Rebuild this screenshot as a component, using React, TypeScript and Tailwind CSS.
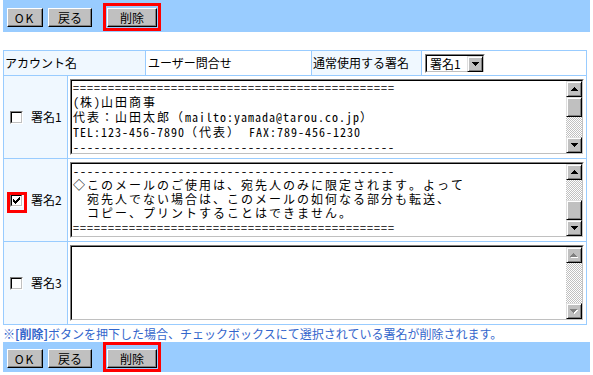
import type { ReactNode } from "react";

const MONO = "font-['Noto_Sans_Mono_CJK_JP','Noto_Sans_CJK_JP',monospace]";

const UP = ["...#...", "..###..", ".#####.", "#######"];
const DOWN = [...UP].reverse();
const CHECK = ["......#", ".....##", "#...###", "##.###.", "#####..", ".###...", "..#...."];

const LINE_EQ = "=".repeat(46);
const LINE_DASH = "-".repeat(46);

const SIG1 = [
  LINE_EQ,
  "(株)山田商事",
  "代表：山田太郎（mailto:yamada@tarou.co.jp）",
  "TEL:123-456-7890（代表）　FAX:789-456-1230",
  LINE_DASH,
];

const SIG2 = [
  LINE_DASH,
  "◇このメールのご使用は、宛先人のみに限定されます。よって",
  "　宛先人でない場合は、このメールの如何なる部分も転送、",
  "　コピー、プリントすることはできません。",
  LINE_EQ,
];

// 1px ドット絵（矢印・チェック）
function Pixels({ rows, color, shadow }: { rows: string[]; color: string; shadow?: string }) {
  const w = rows[0].length + (shadow ? 1 : 0);
  const h = rows.length + (shadow ? 1 : 0);
  const dots = (fill: string, off: number) =>
    rows.flatMap((r, y) =>
      [...r].map((c, x) =>
        c === "#" ? (
          <rect key={`${fill}-${x}-${y}`} x={x + off} y={y + off} width={1} height={1} fill={fill} />
        ) : null,
      ),
    );
  return (
    <svg width={w} height={h} shapeRendering="crispEdges">
      {shadow && dots(shadow, 1)}
      {dots(color, 0)}
    </svg>
  );
}

// 全角は14px、半角は7px のマスに揃える
function MonoLine({ line, lineClass }: { line: string; lineClass: string }) {
  const runs: { wide: boolean; s: string }[] = [];
  for (const ch of line) {
    const wide = ch.charCodeAt(0) > 0xff;
    const last = runs[runs.length - 1];
    if (last && last.wide === wide) last.s += ch;
    else runs.push({ wide, s: ch });
  }
  return (
    <div className={`whitespace-pre ${lineClass}`}>
      {runs.map((r, i) => (
        <span key={i} className={r.wide ? "tracking-[2px]" : "tracking-[1px]"}>
          {r.s}
        </span>
      ))}
    </div>
  );
}

function WinButton({ className, children }: { className: string; children: ReactNode }) {
  return (
    <button
      type="button"
      className={`flex h-[19px] items-center justify-center border border-t-white border-l-white border-r-black border-b-black bg-[#c0c0c0] text-[12px] leading-none text-black shadow-[inset_-1px_-1px_0_#808080] ${className}`}
    >
      {children}
    </button>
  );
}

function ButtonBar({ bottom }: { bottom?: boolean }) {
  return (
    <div className={`flex w-[587px] items-start bg-[#99ccff] pl-[4px] ${bottom ? "h-[30px]" : "h-[32px]"}`}>
      <WinButton className={`w-[36px] tracking-[2px] ${bottom ? "mt-[7px]" : "mt-[8px]"}`}>OK</WinButton>
      <WinButton className={`ml-[5px] w-[44px] ${bottom ? "mt-[7px]" : "mt-[8px]"}`}>戻る</WinButton>
      <div
        className={`ml-[11px] border-[3px] border-[#ff0000] px-[1px] pb-[1px] ${bottom ? "pt-[4px]" : "mt-[3px] pt-[2px]"}`}
      >
        <WinButton className="w-[50px]">削除</WinButton>
      </div>
    </div>
  );
}

function Sunken({ className, children }: { className: string; children: ReactNode }) {
  return (
    <div className={`border border-t-[#808080] border-l-[#808080] border-r-white border-b-white ${className}`}>
      <div className="flex h-full border border-t-black border-l-black border-r-[#c0c0c0] border-b-[#c0c0c0] bg-white">
        {children}
      </div>
    </div>
  );
}

function ScrollButton({ rows, disabled }: { rows: string[]; disabled?: boolean }) {
  return (
    <div className="flex h-[16px] w-[16px] shrink-0 items-center justify-center border border-t-[#dfdfdf] border-l-[#dfdfdf] border-r-black border-b-black bg-[#c0c0c0] shadow-[inset_1px_1px_0_#fff,inset_-1px_-1px_0_#808080]">
      {disabled ? (
        <Pixels rows={rows} color="#808080" shadow="#ffffff" />
      ) : (
        <Pixels rows={rows} color="#000000" />
      )}
    </div>
  );
}

function Track() {
  return (
    <div className="flex-1 bg-[repeating-conic-gradient(#c0c0c0_0_25%,#ffffff_0_50%)] bg-[length:2px_2px]" />
  );
}

function Thumb() {
  return (
    <div className="h-[20px] shrink-0 border border-t-[#dfdfdf] border-l-[#dfdfdf] border-r-black border-b-black bg-[#c0c0c0] shadow-[inset_1px_1px_0_#fff,inset_-1px_-1px_0_#808080]" />
  );
}

function ScrollBar({ thumb }: { thumb: "top" | "bottom" | "none" }) {
  const disabled = thumb === "none";
  return (
    <div className="flex w-[16px] shrink-0 flex-col">
      <ScrollButton rows={UP} disabled={disabled} />
      {thumb === "top" && <Thumb />}
      <Track />
      {thumb === "bottom" && <Thumb />}
      <ScrollButton rows={DOWN} disabled={disabled} />
    </div>
  );
}

function Checkbox({ checked }: { checked?: boolean }) {
  return (
    <span className="flex h-[13px] w-[13px] shrink-0 border border-t-[#808080] border-l-[#808080] border-r-white border-b-white">
      <span className="flex h-full w-full items-center justify-center border border-t-black border-l-black border-r-[#c0c0c0] border-b-[#c0c0c0] bg-white">
        {checked && <Pixels rows={CHECK} color="#000000" />}
      </span>
    </span>
  );
}

function SignatureRow({
  label,
  lines,
  checked,
  marked,
  thumb,
  textClass,
  lineClass,
}: {
  label: string;
  lines: string[];
  checked?: boolean;
  marked?: boolean;
  thumb: "top" | "bottom" | "none";
  textClass: string;
  lineClass: string;
}) {
  return (
    <div className="flex h-[83px] border-t border-[#99ccff]">
      <div className="flex w-[64px] shrink-0 items-center border-r border-[#99ccff] bg-[#f0f8ff] pl-[6px] text-[12px]">
        <span className="relative flex">
          <Checkbox checked={checked} />
          {marked && (
            <span className="absolute -left-[3px] -top-[2px] h-[21px] w-[20px] border-[3px] border-[#ff0000]" />
          )}
        </span>
        <span className="ml-[8px]">{label}</span>
      </div>
      <div className="flex flex-1 items-center bg-white pl-[2px]">
        <Sunken className="h-[76px] w-[514px]">
          <div className="flex-1 overflow-hidden">
            <div className={`pl-[1px] text-[12px] text-black ${MONO} ${textClass}`}>
              {lines.map((l, i) => (
                <MonoLine key={i} line={l} lineClass={lineClass} />
              ))}
            </div>
          </div>
          <ScrollBar thumb={thumb} />
        </Sunken>
      </div>
    </div>
  );
}

export default function App() {
  return (
    <div className="h-[375px] w-[593px] bg-white pl-[3px] font-['Noto_Sans_CJK_JP','Noto_Sans',sans-serif] text-[12px] text-black">
      <ButtonBar />

      <div className="mt-[18px] w-[584px] border border-[#99ccff]">
        <div className="flex h-[24px] items-center">
          <div className="flex h-full w-[142px] items-center border-r border-[#99ccff] bg-[#f0f8ff] pl-[1px]">
            アカウント名
          </div>
          <div className="flex h-full w-[166px] items-center border-r border-[#99ccff] bg-white pl-[2px]">
            ユーザー問合せ
          </div>
          <div className="flex h-full w-[110px] items-center border-r border-[#99ccff] bg-[#f0f8ff] pl-[1px]">
            通常使用する署名
          </div>
          <div className="flex h-full flex-1 items-center bg-white pl-[3px]">
            <Sunken className="h-[19px] w-[60px]">
              <span className="flex-1 pl-[3px] text-[12px] leading-[15px]">署名1</span>
              <ScrollButton rows={DOWN} />
            </Sunken>
          </div>
        </div>

        <SignatureRow
          label="署名1"
          lines={SIG1}
          thumb="top"
          textClass="-mt-[2px]"
          lineClass="h-[15px] leading-[15px]"
        />
        <SignatureRow
          label="署名2"
          lines={SIG2}
          checked
          marked
          thumb="bottom"
          textClass=""
          lineClass="h-[14px] leading-[14px]"
        />
        <SignatureRow label="署名3" lines={[]} thumb="none" textClass="" lineClass="h-[14px] leading-[14px]" />
      </div>

      <p className="h-[17px] leading-[17px] text-[#3366cc]">
        ※<span className="font-bold">[削除]</span>ボタンを押下した場合、チェックボックスにて選択されている署名が削除されます。
      </p>

      <ButtonBar bottom />
    </div>
  );
}
